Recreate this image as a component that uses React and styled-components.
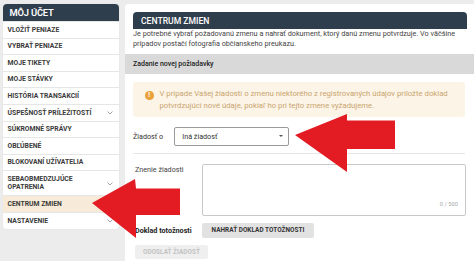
import React from "react";
import styled, { createGlobalStyle } from "styled-components";

const Global = createGlobalStyle`
  html, body { margin: 0; padding: 0; background: #ececec; }
  body { font-family: Roboto, "Liberation Sans", sans-serif; color: #333; overflow: hidden; }
  * { box-sizing: border-box; }
`;

const Page = styled.div`
  display: flex;
  align-items: flex-start;
  gap: 6px;
  padding: 4px 0 0 2.5px;
  width: 474px;
  height: 261px;
  overflow: hidden;
  position: relative;
`;

const Sidebar = styled.nav`
  width: 116.5px;
  flex: none;
  background: #fff;
  border-radius: 4px;
  box-shadow: 0 0 1px rgba(0,0,0,0.15);
  overflow: hidden;
`;

const SideHeader = styled.div`
  background: #2f3e4c;
  color: #fff;
  height: 17px;
  padding-left: 7px;
  display: flex;
  align-items: center;
  font-size: 9.4px;
  font-weight: 600;
  letter-spacing: -0.2px;
`;

const SideItem = styled.div`
  display: flex;
  align-items: center;
  justify-content: space-between;
  padding: 3.6px 6px 3.6px 5px;
  border-top: 1px solid #e6e6e6;
  font-size: 6.8px;
  font-weight: 700;
  line-height: 8.4px;
  color: #3a3a3a;
  text-transform: uppercase;
  background: ${p => (p.$active ? "#f7ead8" : "#fff")};
  &:first-of-type { border-top: none; }
`;

const Chevron = styled.svg`
  width: 6px;
  height: 4px;
  flex: none;
  margin-top: 1px;
`;

const Main = styled.main`
  flex: 1;
  background: #fff;
  border-radius: 4px 0 0 0;
  padding: 8px 7px 0 8px;
  height: 257px;
`;

const MainHeader = styled.div`
  background: #2f3e4c;
  color: #fff;
  height: 17px;
  border-radius: 4px 4px 0 0;
  padding-left: 8px;
  display: flex;
  align-items: center;
  font-size: 8.6px;
  font-weight: 500;
`;

const Intro = styled.p`
  margin: 0;
  font-size: 7.25px;
  line-height: 9.5px;
  color: #444;
  padding-right: 2px;
`;

const SectionBar = styled.div`
  margin: 6px -7px 0 -8px;
  background: #d9d9d9;
  height: 20px;
  padding-left: 8px;
  display: flex;
  align-items: center;
  font-size: 7px;
  font-weight: 500;
  color: #222;
`;

const Warning = styled.div`
  margin: 8px 2px 0 0;
  background: #fcf4e7;
  border-radius: 3px;
  height: 35px;
  display: flex;
  align-items: center;
  gap: 6px;
  padding-left: 12px;
  font-size: 7.75px;
  line-height: 12px;
  color: #c9a46f;
`;

const WarnIcon = styled.span`
  width: 8.5px;
  height: 8.5px;
  border-radius: 50%;
  background: #e9a23b;
  color: #fff;
  font-size: 6.5px;
  font-weight: 700;
  display: flex;
  align-items: center;
  justify-content: center;
  flex: none;
  align-self: flex-start;
  margin-top: 9px;
`;

const SelectRow = styled.div`
  margin-top: 9.5px;
  display: flex;
  align-items: center;
  gap: 11px;
  padding-bottom: 7px;
  border-bottom: 1px solid #e6e6e6;
  margin-right: 2px;
  font-size: 7.2px;
  color: #333;
`;

const Select = styled.div`
  width: 115px;
  height: 19px;
  border: 1px solid #9a9a9a;
  border-radius: 2px;
  display: flex;
  align-items: center;
  justify-content: space-between;
  padding: 0 5px 0 7px;
  font-size: 7.2px;
  color: #333;
`;

const Caret = styled.span`
  width: 0;
  height: 0;
  border-left: 2.5px solid transparent;
  border-right: 2.5px solid transparent;
  border-top: 2.5px solid #555;
`;

const FormGrid = styled.div`
  display: grid;
  grid-template-columns: 67px 1fr;
  align-items: start;
  margin-top: 10px;
  padding-left: 2px;
  margin-right: 1px;
  row-gap: 6.5px;
`;

const Label = styled.div`
  font-size: 7.2px;
  font-weight: ${p => (p.$bold ? 700 : 400)};
  color: ${p => (p.$bold ? "#222" : "#444")};
  padding-top: ${p => p.$pt || 0}px;
  align-self: ${p => (p.$center ? "center" : "start")};
`;

const TextArea = styled.div`
  height: 52.5px;
  border: 1px solid #c8c8c8;
  border-radius: 2px;
  display: flex;
  align-items: flex-end;
  justify-content: flex-end;
  padding: 0 7px 8px 0;
  font-size: 5.8px;
  color: #aaa;
`;

const Button = styled.div`
  display: inline-flex;
  align-items: center;
  justify-content: center;
  height: ${p => p.$h || 15}px;
  width: ${p => p.$w}px;
  background: ${p => (p.$disabled ? "#efefef" : "#e2e2e2")};
  color: ${p => (p.$disabled ? "#c2c2c2" : "#333")};
  border-radius: 2px;
  font-size: 6.4px;
  font-weight: 700;
  text-transform: uppercase;
  letter-spacing: 0.05px;
`;

const SubmitRow = styled.div`
  margin-top: 1.5px;
  padding-left: 2px;
`;

const Overlay = styled.svg`
  position: absolute;
  left: 0;
  top: 0;
  width: 474px;
  height: 261px;
  pointer-events: none;
`;

const ChevronIcon = () => (
  <Chevron viewBox="0 0 6 4">
    <path d="M0.5 0.5 L3 3 L5.5 0.5" fill="none" stroke="#9a9a9a" strokeWidth="0.9" />
  </Chevron>
);

const items = [
  { t: "Vložiť peniaze" },
  { t: "Vybrať peniaze" },
  { t: "Moje tikety" },
  { t: "Moje stávky" },
  { t: "História transakcií" },
  { t: "Úspešnosť príležitostí", c: true },
  { t: "Súkromné správy" },
  { t: "Obľúbené" },
  { t: "Blokovaní užívatelia" },
  { t: "Sebaobmedzujúce\nopatrenia", c: true },
  { t: "Centrum zmien", a: true },
  { t: "Nastavenie", c: true },
];

export default function App() {
  return (
    <>
      <Global />
      <Page>
        <Sidebar>
          <SideHeader>MÔJ ÚČET</SideHeader>
          {items.map((it) => (
            <SideItem key={it.t} $active={it.a}>
              <span style={{ whiteSpace: "pre-line" }}>{it.t}</span>
              {it.c && <ChevronIcon />}
            </SideItem>
          ))}
        </Sidebar>
        <Main>
          <MainHeader>CENTRUM ZMIEN</MainHeader>
          <Intro>
            Je potrebné vybrať požadovanú zmenu a nahrať dokument, ktorý danú zmenu potvrdzuje. Vo väčšine prípadov postačí fotografia občianskeho preukazu.
          </Intro>
          <SectionBar>Zadanie novej požiadavky</SectionBar>
          <Warning>
            <WarnIcon>!</WarnIcon>
            <span>
              V prípade Vašej žiadosti o zmenu niektorého z registrovaných údajov priložte doklad
              <br />
              potvrdzujúci nové údaje, pokiaľ ho pri tejto zmene vyžadujeme.
            </span>
          </Warning>
          <SelectRow>
            <span>Žiadosť o</span>
            <Select>
              <span>Iná žiadosť</span>
              <Caret />
            </Select>
          </SelectRow>
          <FormGrid>
            <Label $pt={1}>Znenie žiadosti</Label>
            <TextArea>0 / 500</TextArea>
            <Label $bold $center>Doklad totožnosti</Label>
            <Button $w={112}>Nahrať doklad totožnosti</Button>
          </FormGrid>
          <SubmitRow>
            <Button $disabled $w={73} $h={14}>Odoslať žiadosť</Button>
          </SubmitRow>
        </Main>
        <Overlay viewBox="0 0 474 261">
          <polygon points="92,203 135,179 136,188.5 180,188.5 180,215 136,215 136,238" fill="#e31b23" />
          <polygon points="295,135 347,114 347,120.5 395,120.5 395,149 347,149 347,172" fill="#e31b23" />
        </Overlay>
      </Page>
    </>
  );
}
